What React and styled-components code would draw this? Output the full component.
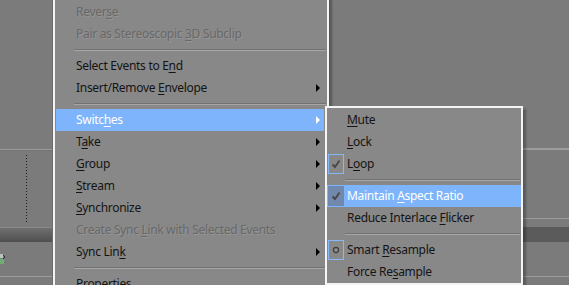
import React from 'react';
import styled, { createGlobalStyle } from 'styled-components';

const colors = {
  desk: '#7b7b7b',
  menu: '#888888',
  border: '#f4f4f4',
  hover: '#7db4fb',
  text: '#141414',
  disabled: '#686868',
  rule: '#9c9c9c',
  band: '#5b5b5b',
  boxLine: '#86b7f7',
};

const GlobalStyle = createGlobalStyle`
  html, body {
    margin: 0;
    padding: 0;
    background: ${colors.desk};
  }
  body {
    font-family: "Noto Sans", "DejaVu Sans", sans-serif;
    font-size: 12px;
    letter-spacing: -0.3px;
  }
`;

const Stage = styled.div`
  position: relative;
  width: 569px;
  height: 285px;
  overflow: hidden;
  display: grid;
  grid-template-columns: 53px 1fr;
  background: ${colors.desk};
`;

const Pane = styled.div`
  display: flex;
  flex-direction: column;
  border-right: ${({ $edge }) => ($edge ? '1px solid #6d6d6d' : 'none')};
`;

const Gap = styled.div`
  position: relative;
  height: ${({ $h }) => $h}px;
  flex: ${({ $grow }) => ($grow ? 1 : 'none')};
`;

const Rule = styled.div`
  height: ${({ $h }) => $h || 1}px;
  background: ${({ $dark }) => ($dark ? '#727272' : colors.rule)};
`;

const Band = styled.div`
  height: 15px;
  background: ${({ $shade }) =>
    $shade
      ? 'linear-gradient(#8a8a8a 0, #8a8a8a 1px, #6f6f6f 1px, #4f4f4f 100%)'
      : colors.band};
`;

const Dotted = styled.div`
  margin: 4px 0 0 26px;
  width: 1px;
  height: 68px;
  background: repeating-linear-gradient(#1e1e1e 0, #1e1e1e 1px, transparent 1px, transparent 3px);
`;

const SyncIcon = styled.svg`
  display: block;
  margin-top: 10px;
`;

const MenuBox = styled.div`
  position: absolute;
  left: ${({ $x }) => $x}px;
  top: ${({ $y }) => $y}px;
  width: ${({ $w }) => $w}px;
  box-sizing: border-box;
  border: 2px solid ${colors.border};
  background: ${colors.menu};
  padding-top: ${({ $pad }) => $pad}px;
  box-shadow: 3px 3px 2px rgba(0, 0, 0, 0.28);
  z-index: ${({ $z }) => $z};
`;

const Row = styled.div`
  height: 22px;
  display: flex;
  align-items: center;
  margin: ${({ $sub }) => ($sub ? '0' : '0 3px 0 1px')};
  padding-left: ${({ $sub }) => ($sub ? 0 : 20)}px;
  background: ${({ $active }) => ($active ? colors.hover : 'transparent')};
  color: ${({ $active, $disabled }) =>
    $active ? '#ffffff' : $disabled ? colors.disabled : colors.text};
  text-shadow: ${({ $disabled }) =>
    $disabled ? '1px 1px 0 rgba(255,255,255,0.12)' : 'none'};
  white-space: nowrap;

  u {
    text-decoration: underline;
    text-decoration-thickness: 1px;
    text-underline-offset: 2px;
  }
`;

const Label = styled.span`
  flex: 1;
  line-height: 22px;
`;

const Arrow = styled.span`
  width: 0;
  height: 0;
  margin-right: 4px;
  border-top: 4px solid transparent;
  border-bottom: 4px solid transparent;
  border-left: 4px solid ${({ $active }) => ($active ? '#ffffff' : '#000000')};
`;

const Gutter = styled.div`
  width: 20px;
  height: 22px;
  display: flex;
  align-items: center;
`;

const Mark = styled.div`
  box-sizing: border-box;
  width: 16px;
  height: 20px;
  margin-left: 1px;
  border: 1px solid ${({ $active }) => ($active ? '#6a88b4' : colors.boxLine)};
  background: ${({ $active }) => ($active ? '#7389ab' : 'transparent')};
  display: flex;
  align-items: center;
  justify-content: center;
`;

const Separator = styled.div`
  height: 10px;
  display: flex;
  flex-direction: column;
  justify-content: center;
  margin: 0 1px 0 ${({ $sub }) => ($sub ? 18 : 19)}px;

  &::before {
    content: '';
    height: 1px;
    background: #727272;
  }
  &::after {
    content: '';
    height: 1px;
    background: #a6a6a6;
  }
`;

const Check = () => (
  <svg width="10" height="10" viewBox="0 0 10 10">
    <path d="M1.5 5.5 L4 8 L8.5 1.5" fill="none" stroke="#474747" strokeWidth="1.8" />
  </svg>
);

const Dot = () => (
  <svg width="8" height="8" viewBox="0 0 8 8">
    <circle cx="4" cy="4" r="2.6" fill="none" stroke="#3c3c3c" strokeWidth="1.1" />
  </svg>
);

const mainItems = [
  { t: ['Rever', 's', 'e'], disabled: true },
  { t: ['Pair as Stereoscopic ', '3', 'D Subclip'], disabled: true },
  { sep: true },
  { t: ['Select Events to E', 'n', 'd'] },
  { t: ['Insert/Remove ', 'E', 'nvelope'], sub: true },
  { sep: true },
  { t: ['Switc', 'h', 'es'], sub: true, active: true },
  { t: ['T', 'a', 'ke'], sub: true },
  { t: ['', 'G', 'roup'], sub: true },
  { t: ['', 'S', 'tream'], sub: true },
  { t: ['', 'S', 'ynchronize'], sub: true },
  { t: ['Create Sync ', 'L', 'ink with Selected Events'], disabled: true },
  { t: ['Sync Lin', 'k', ''], sub: true },
  { sep: true },
  { t: ['', 'P', 'roperties'] },
];

const subItems = [
  { t: ['', 'M', 'ute'] },
  { t: ['', 'L', 'ock'] },
  { t: ['L', 'o', 'op'], mark: 'check' },
  { sep: true },
  { t: ['Maintain ', 'A', 'spect Ratio'], mark: 'check', active: true },
  { t: ['Reduce Interlace ', 'F', 'licker'] },
  { sep: true },
  { t: ['Smart ', 'R', 'esample'], mark: 'dot' },
  { t: ['Force Re', 's', 'ample'] },
];

const Text = ({ t }) => (
  <Label>
    {t[0]}
    <u>{t[1]}</u>
    {t[2]}
  </Label>
);

const App = () => (
  <>
    <GlobalStyle />
    <Stage>
      <Pane $edge>
        <Gap $h={149} />
        <Rule />
        <Rule $dark />
        <Gap $h={76}>
          <Dotted />
        </Gap>
        <Band $shade />
        <Gap $h={34}>
          <SyncIcon width="8" height="14" viewBox="0 0 8 14">
            <path d="M-3 2 H3 V6 H-3 Z" fill="#b9c7b9" />
            <path d="M-3 7 H4 V12 H-3 Z" fill="#6fae72" />
            <path d="M3 3 L5 5 L3 7" fill="none" stroke="#2c2c2c" strokeWidth="1" />
          </SyncIcon>
        </Gap>
        <Rule />
        <Gap $grow />
      </Pane>
      <Pane>
        <Gap $h={148} />
        <Rule $h={2} />
        <Gap $h={68} />
        <Rule />
        <Gap $h={8} />
        <Band />
        <Gap $h={34} />
        <Rule />
        <Gap $grow />
      </Pane>

      <MenuBox $x={53} $y={-4} $w={276} $pad={3} $z={2}>
        {mainItems.map((item, i) =>
          item.sep ? (
            <Separator key={i} />
          ) : (
            <Row key={i} $active={item.active} $disabled={item.disabled}>
              <Text t={item.t} />
              {item.sub && <Arrow $active={item.active} />}
            </Row>
          ),
        )}
      </MenuBox>

      <MenuBox $x={325} $y={106} $w={198} $pad={1} $z={3}>
        {subItems.map((item, i) =>
          item.sep ? (
            <Separator key={i} $sub />
          ) : (
            <Row key={i} $sub $active={item.active}>
              <Gutter>
                {item.mark && (
                  <Mark $active={item.active}>
                    {item.mark === 'check' ? <Check /> : <Dot />}
                  </Mark>
                )}
              </Gutter>
              <Text t={item.t} />
            </Row>
          ),
        )}
      </MenuBox>
    </Stage>
  </>
);

export default App;
